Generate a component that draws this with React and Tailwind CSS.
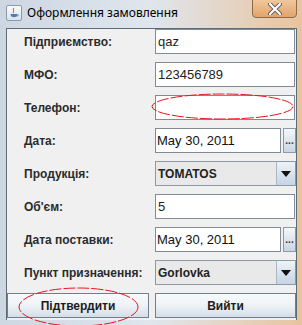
import React from 'react';

const labelCls = "h-[25px] flex items-center text-[12px] font-bold text-[#2b2b2b]";

const TextField = ({ value }) => (
  <div className="h-[25px] w-[140px] border border-[#7f8c98] bg-white flex items-center px-[2px] text-[13px] text-[#222]">
    {value}
  </div>
);

const DateField = ({ value }) => (
  <div className="h-[25px] w-[141px] flex gap-[2px]">
    <div className="h-[25px] w-[126px] border border-[#7f8c98] bg-white flex items-center px-[1px] text-[13px] text-[#111]">
      {value}
    </div>
    <div className="h-[25px] flex-1 border border-[#8b9aa8] bg-gradient-to-b from-[#f4f7fa] to-[#c8d6e3] flex items-end justify-center pb-[6px] text-[10px] font-bold leading-none text-[#333]">
      ...
    </div>
  </div>
);

const Combo = ({ value }) => (
  <div className="h-[25px] w-[141px] flex border border-[#8b9aa8] bg-[#e9e9e9]">
    <div className="flex-1 flex items-center px-[2px] text-[12px] font-bold text-[#222] border-r border-[#aab8c6]">
      {value}
    </div>
    <div className="w-[18px] bg-gradient-to-b from-[#eef3f8] to-[#c5d5e4] flex items-center justify-center">
      <svg width="10" height="6" viewBox="0 0 10 6">
        <path d="M0 0 H10 L5 6 Z" fill="#111" />
      </svg>
    </div>
  </div>
);

const Button = ({ children }) => (
  <div className="h-[25px] flex items-center justify-center border border-[#707f8e] bg-gradient-to-b from-[#f8fafc] via-[#eef2f6] to-[#d4dee8] text-[12px] font-bold text-[#1c1c1c]">
    {children}
  </div>
);

export default function App() {
  return (
    <div
      className="relative w-[302px] h-[325px] overflow-hidden bg-gradient-to-r from-[#cdd7e2] via-[#dfe6ee] to-[#e8c49e]"
      style={{ fontFamily: '"Liberation Sans", Arial, sans-serif' }}
    >
      {/* title bar */}
      <div className="h-[28px] flex items-start">
        <div className="ml-[6px] mt-[5px] w-[16px] h-[16px] rounded-[2px] border border-[#8a9aab] bg-gradient-to-b from-[#fafcfe] to-[#d8e2ec] flex items-center justify-center">
          <svg width="12" height="12" viewBox="0 0 12 12">
            <path d="M6 1 C4 3 7 4 5 6" stroke="#e07a1a" strokeWidth="1.2" fill="none" />
            <path d="M2.5 7 H9 V9 C9 10.5 3 10.5 3 9 Z" fill="#4c7bb6" />
            <path d="M9 7.5 C11 7.5 11 9 9 9" stroke="#4c7bb6" strokeWidth="0.8" fill="none" />
          </svg>
        </div>
        <div className="ml-[5px] mt-[5px] text-[12px] leading-[16px] text-black" style={{ fontFamily: '"Noto Sans", "Open Sans", sans-serif' }}>
          Оформлення замовлення
        </div>
        <div className="ml-auto mr-[5px] -mt-[1px] w-[45px] h-[19px] rounded-b-[4px] border border-[#8d6a4a] bg-gradient-to-b from-[#f0c79c] to-[#e2a36a] flex items-center justify-center">
          <svg width="14" height="12" viewBox="0 0 14 12">
            <path d="M2 1 L12 11 M12 1 L2 11" stroke="#5a5a5a" strokeWidth="4" strokeLinecap="round" />
            <path d="M2 1 L12 11 M12 1 L2 11" stroke="#ffffff" strokeWidth="2.2" strokeLinecap="round" />
          </svg>
        </div>
      </div>

      {/* content */}
      <div className="ml-[6px] mr-[5px] h-[292px] border-l border-t border-r border-[#5f6b77] bg-[#f0f0f0]">
        <div className="grid grid-cols-[148px_141px] gap-y-[8px] pt-[0px]">
          <div className={labelCls + " pl-[17px]"}>Підприємство:</div>
          <TextField value="qaz" />
          <div className={labelCls + " pl-[17px]"}>МФО:</div>
          <TextField value="123456789" />
          <div className={labelCls + " pl-[17px]"}>Телефон:</div>
          <TextField value="" />
          <div className={labelCls + " pl-[17px]"}>Дата:</div>
          <DateField value="May 30, 2011" />
          <div className={labelCls + " pl-[17px]"}>Продукція:</div>
          <Combo value="TOMATOS" />
          <div className={labelCls + " pl-[17px]"}>Об'єм:</div>
          <TextField value="5" />
          <div className={labelCls + " pl-[17px]"}>Дата поставки:</div>
          <DateField value="May 30, 2011" />
          <div className={labelCls + " pl-[17px]"}>Пункт призначення:</div>
          <Combo value="Gorlovka" />
        </div>
        <div className="grid grid-cols-[142px_141px] gap-x-[6px] mt-[8px]">
          <Button>Підтвердити</Button>
          <Button>Вийти</Button>
        </div>
      </div>

      {/* annotation ellipses */}
      <svg className="absolute left-0 top-0 pointer-events-none" width="302" height="325">
        <ellipse cx="222.5" cy="106.5" rx="70.5" ry="12.5" fill="none" stroke="#e8141e" strokeWidth="1" strokeDasharray="12 2" />
        <ellipse cx="78.5" cy="307" rx="59.5" ry="19" fill="none" stroke="#e8141e" strokeWidth="1" strokeDasharray="12 2" />
      </svg>
    </div>
  );
}
